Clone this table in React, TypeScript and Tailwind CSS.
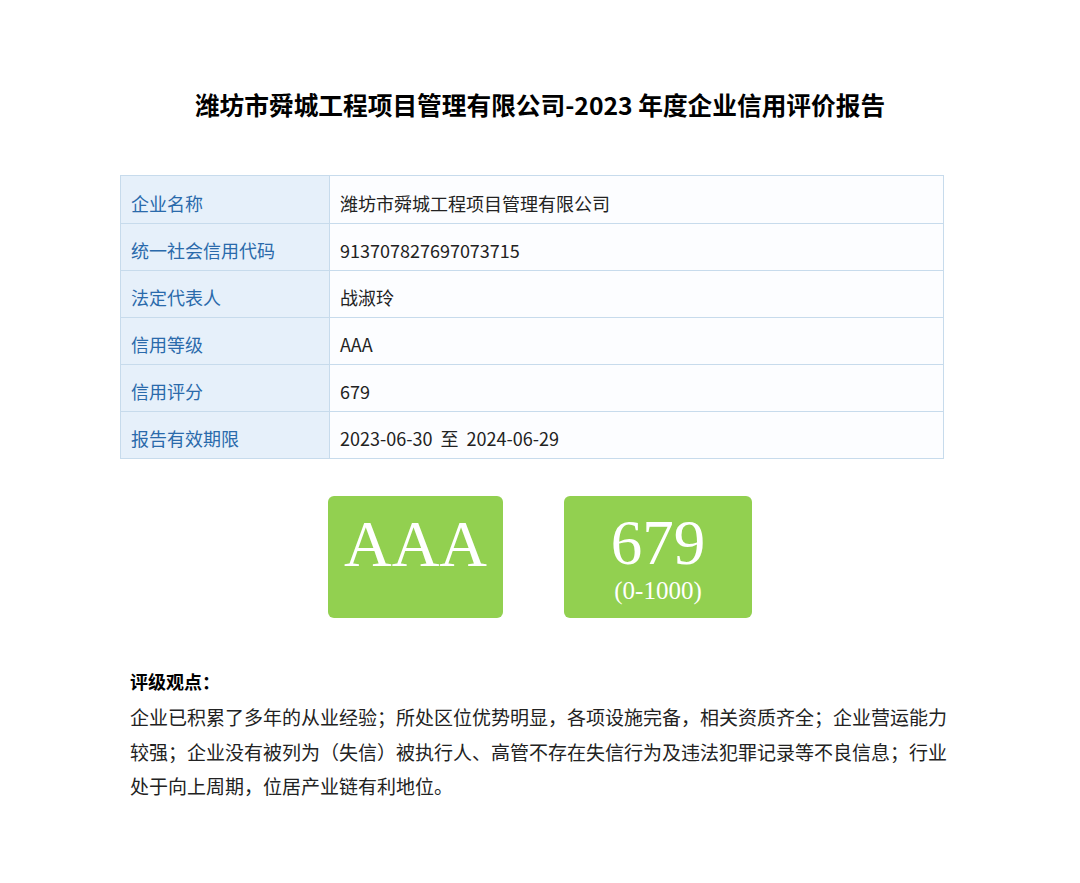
const rows = [
  ["企业名称", "潍坊市舜城工程项目管理有限公司"],
  ["统一社会信用代码", "913707827697073715"],
  ["法定代表人", "战淑玲"],
  ["信用等级", "AAA"],
  ["信用评分", "679"],
  ["报告有效期限", "2023-06-30\u00a0\u00a0至\u00a0\u00a02024-06-29"],
];

export default function App() {
  return (
    <div className="min-h-[883px] w-[1080px] bg-white text-[#1a1a1a] font-['Noto_Sans_CJK_SC',sans-serif]">
      {/* Title */}
      <h1 className="pt-[86px] text-center text-[24.7px] font-bold leading-[36px] text-black">
        潍坊市舜城工程项目管理有限公司-2023 年度企业信用评价报告
      </h1>

      {/* Info table */}
      <div className="ml-[120px] mr-[136px] mt-[53px] border border-[#c7dbec]">
        {rows.map(([label, value], i) => (
          <div
            key={label}
            className={`flex h-[47px] ${i > 0 ? "border-t border-[#c7dbec]" : ""}`}
          >
            <div className="flex w-[209px] items-center border-r border-[#c7dbec] bg-[#e6f0fa] pl-[10px] pt-[7px] text-[18px] text-[#2a6aab]">
              {label}
            </div>
            <div className="flex flex-1 items-center bg-[#fcfdff] pl-[10px] pt-[7px] text-[18px] text-[#222]">
              {value}
            </div>
          </div>
        ))}
      </div>

      {/* Score boxes */}
      <div className="mt-[37px] flex justify-center gap-[61px]">
        <div className="flex h-[122px] w-[175px] items-start justify-center rounded-[6px] bg-[#92d050] pt-[15px] font-['Liberation_Serif',serif] text-[66px] leading-[66px] text-white">
          AAA
        </div>
        <div className="flex h-[122px] w-[188px] flex-col items-center rounded-[6px] bg-[#92d050] pt-[16px] font-['Liberation_Serif',serif] text-white">
          <span className="text-[63px] leading-[62px]">679</span>
          <span className="mt-[4px] text-[25px] leading-[26px]">(0-1000)</span>
        </div>
      </div>

      {/* Rating view */}
      <div className="ml-[130px] mt-[46px] w-[825px]">
        <h2 className="text-[18px] font-bold leading-[34px] text-black">评级观点：</h2>
        <p className="mt-[2px] text-[19px] leading-[34.5px] text-[#222]">
          企业已积累了多年的从业经验；所处区位优势明显，各项设施完备，相关资质齐全；企业营运能力较强；企业没有被列为（失信）被执行人、高管不存在失信行为及违法犯罪记录等不良信息；行业处于向上周期，位居产业链有利地位。
        </p>
      </div>
    </div>
  );
}
